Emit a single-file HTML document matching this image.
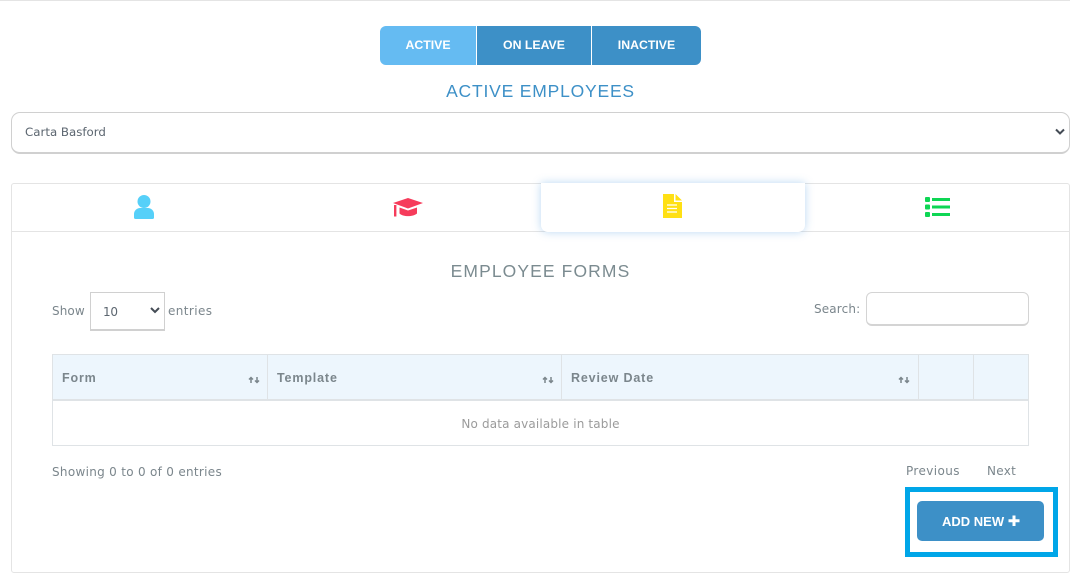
<!DOCTYPE html>
<html><head><meta charset="utf-8"><style>
html,body{margin:0;padding:0;background:#fff;width:1075px;height:576px;overflow:hidden}
body{position:relative;font-family:"DejaVu Sans","Liberation Sans",sans-serif;color:#7b868c}
.a{position:absolute;box-sizing:border-box}
.t{position:absolute;white-space:nowrap;line-height:16px}
.b{font-family:"Liberation Sans",sans-serif;font-weight:700;color:#fff;font-size:12.3px;text-align:center;line-height:39px;top:26px;height:39px}
.h{font-size:12.5px;font-weight:700;font-family:"Liberation Sans",sans-serif;letter-spacing:.85px;top:370px}
</style></head><body>
<div class="a" style="left:0;top:0;width:1070px;height:1px;background:#e4e4e4"></div>

<div class="a b" style="left:380px;width:96px;background:#65bbf2;border-radius:6px 0 0 6px">ACTIVE</div>
<div class="a b" style="left:477px;width:114px;background:#3d90c7">ON LEAVE</div>
<div class="a b" style="left:592px;width:109px;background:#3d90c7;border-radius:0 6px 6px 0">INACTIVE</div>
<div class="t" style="left:340px;width:401px;text-align:center;top:81px;line-height:20px;font-size:17.5px;color:#3d90c7;font-family:'Liberation Sans',sans-serif;letter-spacing:.8px">ACTIVE EMPLOYEES</div>

<div class="a" style="left:11px;top:112px;width:1059px;height:42px;border:1px solid #d0d0d0;border-bottom-width:2px;border-radius:9px"></div>
<div class="t" style="left:25px;top:124px;font-size:11.8px;color:#5c6670">Carta Basford</div>
<svg class="a" style="left:1054px;top:127px" width="12" height="10" viewBox="0 0 12 10"><path d="M2 2.500 6 6.500 10 2.500" fill="none" stroke="#444c55" stroke-width="2"/></svg>

<div class="a" style="left:11px;top:183px;width:1059px;height:390px;border:1px solid #e4e4e4;border-radius:3px"></div>
<div class="a" style="left:11px;top:231px;width:1059px;height:1px;background:#e4e4e4"></div>
<div class="a" style="left:541px;top:183px;width:264px;height:49px;background:#fff;border-radius:0 0 7px 7px;box-shadow:0 0 9px rgba(90,160,225,.42)"></div>

<svg class="a" style="left:133px;top:194px" width="22" height="26" viewBox="0 0 22 26"><circle cx="11" cy="7.500" r="6.500" fill="#56d0f9"/><path d="M1 23.500V20C1 16.500 4 14 7 14H15C18 14 21 16.500 21 20V23.500C21 24.500 20.500 25 19.500 25H2.500C1.500 25 1 24.500 1 23.500Z" fill="#56d0f9"/></svg>
<svg class="a" style="left:393px;top:197px" width="31" height="21" viewBox="0 0 31 21"><path d="M15 1 30 6 15 11.500 0 6Z" fill="#f63c5b"/><path d="M6.500 10.500 15 13.500 24 10.500V16.500C20 20 10 20 6.500 16.500Z" fill="#f63c5b"/><rect x="1" y="8" width="2.400" height="11.500" fill="#f63c5b"/></svg>
<svg class="a" style="left:663px;top:194px" width="19" height="24" viewBox="0 0 19 24"><path d="M0 0H11V8H19V24H0Z" fill="#ffe014"/><path d="M12.500 0 19 6.500H12.500Z" fill="#ffe014"/><path d="M4 11H14M4 14.500H14M4 18H14" stroke="#fff" stroke-width="1.200"/></svg>
<svg class="a" style="left:925px;top:196px" width="25" height="22" viewBox="0 0 25 22"><g fill="#0ed654"><rect y="1" width="5" height="5" rx="1"/><rect y="8.500" width="5" height="5" rx="1"/><rect y="16" width="5" height="5" rx="1"/><rect x="7" y="2" width="18" height="3"/><rect x="7" y="9.500" width="18" height="3"/><rect x="7" y="17" width="18" height="3"/></g></svg>

<div class="t" style="left:340px;width:401px;text-align:center;top:261px;line-height:20px;font-size:17.5px;color:#7b8b90;font-family:'Liberation Sans',sans-serif;letter-spacing:1.1px">EMPLOYEE FORMS</div>

<div class="t" style="left:52px;top:303px;font-size:12px;letter-spacing:.1px">Show</div>
<div class="a" style="left:90px;top:292px;width:75px;height:39px;border:1px solid #d0d0d0;border-bottom-width:2px"></div>
<div class="t" style="left:103px;top:304px;font-size:12px;color:#5c6670;letter-spacing:-.3px">10</div>
<svg class="a" style="left:149px;top:306px" width="12" height="10" viewBox="0 0 12 10"><path d="M2 2 6 6 10 2" fill="none" stroke="#444c55" stroke-width="2"/></svg>
<div class="t" style="left:168px;top:303px;font-size:12px;letter-spacing:.4px">entries</div>

<div class="t" style="left:814px;top:301px;font-size:12px;letter-spacing:.15px">Search:</div>
<div class="a" style="left:866px;top:292px;width:163px;height:34px;border:1px solid #d4d4d4;border-bottom-width:2px;border-radius:6px"></div>

<div class="a" style="left:52px;top:354px;width:977px;height:92px;border:1px solid #dfe3e6"></div>
<div class="a" style="left:53px;top:355px;width:975px;height:44px;background:#edf6fd"></div>
<div class="a" style="left:53px;top:399px;width:975px;height:2px;background:#dfe3e6"></div>
<div class="a" style="left:267px;top:355px;width:1px;height:44px;background:#dfe3e6"></div>
<div class="a" style="left:561px;top:355px;width:1px;height:44px;background:#dfe3e6"></div>
<div class="a" style="left:918px;top:355px;width:1px;height:44px;background:#dfe3e6"></div>
<div class="a" style="left:973px;top:355px;width:1px;height:44px;background:#dfe3e6"></div>
<div class="t h" style="left:62px">Form</div>
<div class="t h" style="left:277px">Template</div>
<div class="t h" style="left:571px">Review Date</div>
<svg class="a" style="left:248px;top:376px" width="12" height="8" viewBox="0 0 12 8"><path d="M3 7V2M1 3.500 3 1.500 5 3.500M9 1V6M7 4.500 9 6.500 11 4.500" fill="none" stroke="#7b868c" stroke-width="1.500"/></svg>
<svg class="a" style="left:542px;top:376px" width="12" height="8" viewBox="0 0 12 8"><path d="M3 7V2M1 3.500 3 1.500 5 3.500M9 1V6M7 4.500 9 6.500 11 4.500" fill="none" stroke="#7b868c" stroke-width="1.500"/></svg>
<svg class="a" style="left:898px;top:376px" width="12" height="8" viewBox="0 0 12 8"><path d="M3 7V2M1 3.500 3 1.500 5 3.500M9 1V6M7 4.500 9 6.500 11 4.500" fill="none" stroke="#7b868c" stroke-width="1.500"/></svg>
<div class="t" style="left:340px;width:401px;text-align:center;top:416px;font-size:12px;color:#9b9b9b;letter-spacing:.16px">No data available in table</div>

<div class="t" style="left:52px;top:464px;font-size:12px;letter-spacing:.3px">Showing 0 to 0 of 0 entries</div>
<div class="t" style="left:906px;top:463px;font-size:12px;letter-spacing:.4px">Previous</div>
<div class="t" style="left:987px;top:463px;font-size:12px;letter-spacing:.3px">Next</div>

<div class="a" style="left:905px;top:487px;width:153px;height:70px;border:5px solid #00a6e8"></div>
<div class="a" style="left:917px;top:501px;width:127px;height:40px;background:#3d90c7;border-radius:5px"></div>
<div class="t" style="left:942px;top:514px;font-size:13px;font-weight:700;color:#fff;font-family:'Liberation Sans',sans-serif">ADD NEW</div>
<svg class="a" style="left:1008px;top:515px" width="12" height="12" viewBox="0 0 12 12"><path d="M6 .5V11M.5 5.800H11.500" stroke="#fff" stroke-width="3"/></svg>
</body></html>
